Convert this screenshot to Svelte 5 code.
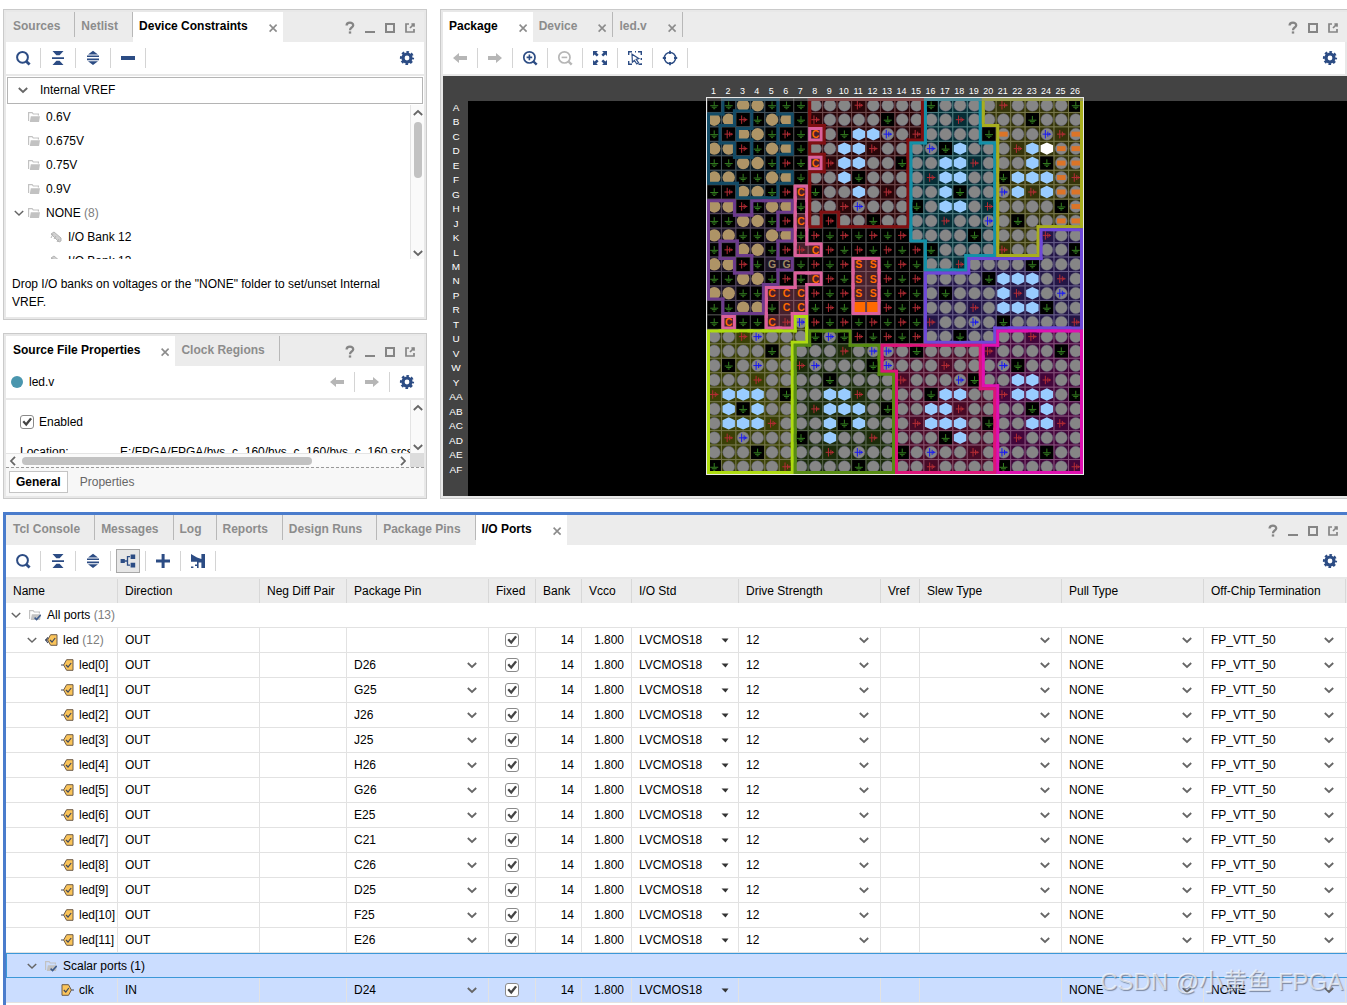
<script lang="ts">
	const CELL = 29;
	const rowNames = 'A B C D E F G H J K L M N P R T U V W Y AA AB AC AD AE AF'.split(' ');

	// g ground, r power, o i/o, t transceiver, h clock capable, b vcco,
	// x placed port, w selected, C/G/S config pins, Q config block
	const pins = [
		'ggttggg oooroooo goooo roooog',
		'ttrgttg roooogoo ooroo oogooo',
		'grttgrg Coghhbor oooog xoobrx',
		'ttrgttg oohhrooo bghoo orhwxx',
		'ggttgrg Crhhoogo ohhro oohgxx',
		'ttggttg oohgoooo rhhoo ghhhxr',
		'grttgrC goohoroo ohgoo bhrhxx',
		'ttrgttg oorbooog ohhor oooogx',
		'ggttgrC oroogooo oroob ogooxx',
		'ttggttg rgrgrgro ooogo oooroo',
		'grttgrr Crgrgrgr goooo roooog',
		'ttrgGGg rgrSSgrg ooroo oogooo',
		'ggttgrg CrgSSrgr oooog hhhoro',
		'ttggCCC rgrSSgrg ogooo hrhobo',
		'ggttgCC grgQQrgr oooro hhhgoo',
		'gCggCrb rgrgrgrg roobo goooor',
		'oorbooo gbgrgrgr oogoo oorooo',
		'oooogoo oorobbog oooor oooogo',
		'ogoboor booogboo orooo bgoooo',
		'ooorooo ogooooro oobgo ohhroo',
		'rhhhogo ohhroooo ghhoo rhhhog',
		'ohghooo rhhhogoo hhroo ooghoo',
		'ohhhroo ohghooor hhhog oohhro',
		'orbooog ohoorooo oghoo oroooo',
		'ooogooo oroboogo booro boogoo',
		'gooooro ooogoooo roooo goooor'
	].map((row) => row.replaceAll(' ', ''));

	// i/o bank of every pin, '.' for none
	const regions = [
		'.dddd..eeeeeeeeccccyyyyyyy',
		'dd.ddd.eeeeeeeeccccyyyyyyy',
		'd.ddd..peeeeeeecccc.yyyyyy',
		'dd.ddd.eeeeeeeccccccyyyyyy',
		'ddddd..peeeeeeccccccyyyyyy',
		'dddddd.eeeeeeeccccccyyyyyy',
		'..ddd.peeeeeeeccccccyyyyyy',
		'zz.zzzpeeeeeeeccccccyyyyyy',
		'zzzzz.pe.eeeeeccccccyyyyyy',
		'zzzzzzp.......ccccccyyysss',
		'z.zzz.pp.......cccccyyysss',
		'zz.zzz....pp...cccssssssss',
		'zzzzz.pp..pp...sssssssssss',
		'zzzzppp...pp...sssssssssss',
		'.zzzppp...pp...sssssssssss',
		'.p..ppl........sssssssssss',
		'lllllllggg.....sssssmmmmmm',
		'llllllggggggkkkkkkkmmmmmmm',
		'llllllggggggkkkkkkkmmmmmmm',
		'llllllgggggggkkkkkkmmmmmmm',
		...Array(6).fill('llllllgggggggkkkkkkkmmmmmm')
	];

	const tint = {
		d: '#0b1c28', z: '#1d1426', p: '#47202c', e: '#290609', c: '#062d35', y: '#34340a',
		s: '#231646', l: '#3a4006', g: '#1b2b0a', k: '#480a26', m: '#42063a'
	};
	const edge = {
		d: '#134b66', z: '#6b3a8b', p: '#dc609c', e: '#801012', c: '#1490a8', y: '#a8ae1e',
		s: '#6e48d8', l: '#aedc10', g: '#578c12', k: '#dc1478', m: '#e010b0'
	};
	const grid = {
		d: '#44525c', z: '#50465c', p: '#7c5560', e: '#70494c', c: '#4d7c80', y: '#77774a',
		s: '#665c88', l: '#74764a', g: '#56634a', k: '#86506a', m: '#824c78'
	};

	// one line per side where the neighbour belongs to another bank
	const borders = regions.flatMap((row, y) =>
		[...row].flatMap((id, x) => {
			if (id == '.') return [];
			const same = (dx: number, dy: number) => regions[y + dy]?.[x + dx] == id;
			// inside a bank a line runs on a little, so inner corners close up
			const l = x * CELL, r = l + CELL, t = y * CELL, b = t + CELL;
			const v = `${t - (same(0, -1) ? 6 : 0)}V${b + (same(0, 1) ? 6 : 0)}`;
			const h = (at: number) => `M${l - (same(-1, 0) ? 6 : 0)} ${at}H${r + (same(1, 0) ? 6 : 0)}`;
			let d = '';
			if (!same(-1, 0)) d += `M${l + 3} ${v}`;
			if (!same(1, 0)) d += `M${r - 3} ${v}`;
			if (!same(0, -1)) d += h(t + 3);
			if (!same(0, 1)) d += h(b - 3);
			return d ? [{ id, d }] : [];
		})
	);

	const ledPins = ['D26', 'G25', 'J26', 'J25', 'H26', 'G26', 'E25', 'C21', 'C26', 'D25', 'F25', 'E26'];
	const base = { dir: 'OUT', fixed: true, bank: 14, vcco: '1.800', std: 'LVCMOS18', drive: '12', pull: 'NONE', term: 'FP_VTT_50' };
	let ports = $state([
		{ ...base, name: 'led', count: 12, level: 1, pin: '' },
		...ledPins.map((pin, i) => ({ ...base, name: `led[${i}]`, count: 0, level: 2, pin }))
	]);
	let scalar = $state([
		{ ...base, name: 'clk', count: 0, level: 2, dir: 'IN', pin: 'D24', drive: '', term: 'NONE' }
	]);
	let enabled = $state(true);

	const columns = [
		['Name', 112], ['Direction', 142], ['Neg Diff Pair', 87], ['Package Pin', 142], ['Fixed', 47],
		['Bank', 46], ['Vcco', 50], ['I/O Std', 107], ['Drive Strength', 142], ['Vref', 39],
		['Slew Type', 142], ['Pull Type', 142], ['Off-Chip Termination', 142]
	];
</script>

{#snippet icon(name)}
	<svg class="icon" viewBox="0 0 16 16" width="16" height="16" aria-hidden="true">
		{#if name == 'search'}
			<circle class="line" cx="7.5" cy="7.3" r="5.4" stroke-width="2" />
			<path class="line" d="M11.4 11.4l3.2 3.2" stroke-width="2.8" />
		{:else if name == 'collapse'}
			<path d="M2.5 1h11L9.6 5.2H6.4zM2 7.2h12v1.7H2zM6.4 10.8h3.2l3.9 4.2h-11z" />
		{:else if name == 'expand'}
			<path d="M8 .8l5 3.8H3zM2 5.4h12v1.6H2zM2 8.6h12v1.6H2zM3 11.2h10L8 15z" />
		{:else if name == 'minus'}
			<path d="M1 6h14v4H1z" />
		{:else if name == 'plus'}
			<path d="M6.6 1h3v5.6H15v3H9.6V15h-3V9.6H1v-3h5.6z" />
		{:else if name == 'gear'}
			<circle class="line" cx="8" cy="8" r="4" stroke-width="3.2" />
			<circle class="line" cx="8" cy="8" r="6" stroke-width="2.2" stroke-dasharray="2.556 2.156" stroke-dashoffset="1.278" />
		{:else if name == 'back'}
			<path d="M1 8l6-5v3h8v4H7v3z" />
		{:else if name == 'forward'}
			<path d="M15 8L9 3v3H1v4h8v3z" />
		{:else if name == 'zoomin' || name == 'zoomout'}
			<circle class="line" cx="7.4" cy="7.4" r="5.6" stroke-width="1.7" />
			<path class="line" d="M11.5 11.5l3.2 3.2" stroke-width="2.4" />
			<path class="line" d={name == 'zoomin' ? 'M4.6 7.4h5.6M7.4 4.6v5.6' : 'M4.6 7.4h5.6'} stroke-width="1.6" />
		{:else if name == 'fit'}
			<path d="M1 1h5L4.4 2.6l2.2 2.2-1.8 1.8-2.2-2.2L1 6zM15 1v5l-1.6-1.6-2.2 2.2-1.8-1.8 2.2-2.2L10 1zM1 15v-5l1.6 1.6 2.2-2.2 1.8 1.8-2.2 2.2L6 15zM15 15h-5l1.6-1.6-2.2-2.2 1.8-1.8 2.2 2.2L15 10z" />
		{:else if name == 'select'}
			<path class="line" d="M1.7 5V1.7H5M11 1.7h3.3V5M1.7 11v3.3H5M14.3 8v2M8 1.7h1M11.5 14.3h2.8v-1" stroke-width="1.4" />
			<path class="line" d="M5 4.2l.4 8 2-1.8 2.4 3.6 1.8-1.2-2.4-3.4 2.6-.8z" stroke-width="1.2" />
		{:else if name == 'target'}
			<circle class="line" cx="8" cy="8" r="5.6" stroke-width="1.5" />
			<path class="line" d="M8 .8V4M8 12v3.2M.8 8H4M12 8h3.2" stroke-width="1.8" />
		{:else if name == 'tree'}
			<path d="M.6 6h4.2v4H.6zM10.6 1.4h4.6v4.6h-4.6zM10.6 9.8h4.6v4.6h-4.6z" />
			<path class="line" d="M4 8h3.5M10 3.7H7.5v8.4H10" stroke-width="1.3" />
		{:else if name == 'ports'}
			<path d="M1 1l6 3.6L11.4 6V1H15v14h-3.6V9.4H8.6V15H7v-2H5v-1.6h2V8.8H1zM1 13.4h2.4V15H1z" />
		{:else if name == 'help'}
			<path class="line" d="M4.6 5.6c0-4 6.8-3.8 6.6-.2C11 7.8 8 7.4 8 10.2" stroke-width="2.3" />
			<path d="M6.8 11.4h2.4v2.2H6.8z" />
		{:else if name == 'min'}
			<path d="M3 11h10v2H3z" />
		{:else if name == 'max'}
			<path class="line" d="M4 4h8v8H4z" stroke-width="2" />
		{:else if name == 'float'}
			<path class="line" d="M7 4H4v8h8V9M8 8l4.4-4.4M9.4 4H12v2.8" stroke-width="1.7" />
		{:else if name == 'close'}
			<path class="line" d="M4.6 4.6l7 7M11.6 4.6l-7 7" stroke-width="1.6" />
		{/if}
	</svg>
{/snippet}

{#snippet chevron(dir = 'down')}
	<svg class="chevron {dir}" viewBox="0 0 10 10" width="10" height="10" aria-hidden="true">
		<path d="M.8 3L5 7l4.2-4" />
	</svg>
{/snippet}

{#snippet folder(checked = false)}
	<svg class="folder" viewBox="0 0 12 12" width="12" height="12" aria-hidden="true">
		<path d="M0 1h4.4l1.2 1.4H11v2H9.8v-.9H5L3.9 2.2H1.2V10H0z" />
		<path d="M2.8 5.2H12l-1 5.8H1.8z" />
		{#if checked}<path class="tick" d="M5.6 8.6l2 2L11.6 6" />{/if}
	</svg>
{/snippet}

{#snippet port(dir, group)}
	<svg class="port" viewBox="0 0 13 12" width="13" height="12" aria-hidden="true">
		{#if dir == 'IN'}
			<path class="body" d="M1 .7h6.5L10.4 6l-2.9 5.3H1z" />
			<path class="tick" d="M2.8 6l2 2 3-4M10.4 6H13" />
		{:else}
			<path class="body" d="M12 .7H5.6L2.6 6l3 5.3H12z" />
			{#if group}<path class="tick" d="M3 3.4L.8 6 3 9" />{/if}
			<path class="tick" d="M5 6l2 2 3.2-4M0 6h2.6" />
		{/if}
	</svg>
{/snippet}

{#snippet tabs(items, active, buttons)}
	<div class="tabs">
		<div class="tablist" role="tablist">
			{#each items as [label, closable]}
				<div class="tab" class:active={label == active}>
					<button role="tab" aria-selected={label == active}>{label}</button>
					{#if closable}<button class="close" aria-label="Close {label}">{@render icon('close')}</button>{/if}
				</div>
			{/each}
		</div>
		<div class="window">
			{#each buttons as b}<button aria-label={b}>{@render icon(b)}</button>{/each}
		</div>
	</div>
{/snippet}

{#snippet tool(name, cls = '')}
	<span class="tool"><button class={cls} aria-label={name} disabled={cls == 'off'}>{@render icon(name)}</button></span>
{/snippet}

{#snippet vscroll(thumb)}
	<div class="vscroll">
		{@render chevron('up')}
		<div class="track">{#if thumb}<div class="thumb"></div>{/if}</div>
		{@render chevron()}
	</div>
{/snippet}

{#snippet combo(value, label, small = false)}
	<span class="combo" class:small>
		<select aria-label={label}><option>{value}</option></select>
		{#if small}
			<svg viewBox="0 0 8 5" width="8" height="5" aria-hidden="true"><path d="M.5 .5h7L4.5 4.5z" /></svg>
		{:else}
			{@render chevron()}
		{/if}
	</span>
{/snippet}

{#snippet portRow(p, selected)}
	<tr class:selected>
		<td>
			<span class="name level{p.level}">
				{#if p.count}{@render chevron()}{/if}
				{@render port(p.dir, p.count > 0)}
				<span>{p.name}{#if p.count}&nbsp;<i>({p.count})</i>{/if}</span>
			</span>
		</td>
		<td>{p.dir}</td>
		<td></td>
		<td>{#if p.pin}{@render combo(p.pin, 'Package pin')}{/if}</td>
		<td class="mid"><input type="checkbox" bind:checked={p.fixed} aria-label="Fixed {p.name}" /></td>
		<td class="num">{p.bank}</td>
		<td class="num">{p.vcco}</td>
		<td>{@render combo(p.std, 'I/O standard', true)}</td>
		<td>{#if p.drive}{@render combo(p.drive, 'Drive strength')}{/if}</td>
		<td></td>
		<td>{#if p.drive}{@render combo('', 'Slew type')}{/if}</td>
		<td>{@render combo(p.pull, 'Pull type')}</td>
		<td>{@render combo(p.term, 'Off-chip termination')}</td>
		<td></td>
	</tr>
{/snippet}

<div class="app">
	<div class="upper">
		<div class="side">
			<section class="panel">
				{@render tabs([['Sources'], ['Netlist'], ['Device Constraints', true]], 'Device Constraints', ['help', 'min', 'max', 'float'])}
				<div class="toolbar">
					{@render tool('search')}
					{@render tool('collapse')}
					{@render tool('expand')}
					{@render tool('minus')}
					<button class="settings" aria-label="Settings">{@render icon('gear')}</button>
				</div>
				<button class="group">{@render chevron()}Internal VREF</button>
				<div class="treebox">
					<ul class="tree">
						{#each ['0.6V', '0.675V', '0.75V', '0.9V'] as v}
							<li>{@render folder()}{v}</li>
						{/each}
						<li class="open">{@render chevron()}{@render folder()}<span>NONE <i>(8)</i></span></li>
						{#each [12, 13] as n}
							<li class="bank">
								<svg class="bankicon" viewBox="0 0 12 12" width="12" height="12" aria-hidden="true">
									<path d="M1 3l3-2 7 6v3l-2 1-7-7zM3 3l-2 4M6 5L4 8M9 8l-2 3" />
								</svg>I/O Bank {n}
							</li>
						{/each}
					</ul>
					{@render vscroll(true)}
				</div>
				<p class="hint">Drop I/O banks on voltages or the "NONE" folder to set/unset Internal VREF.</p>
			</section>

			<section class="panel">
				{@render tabs([['Source File Properties', true], ['Clock Regions']], 'Source File Properties', ['help', 'min', 'max', 'float'])}
				<div class="toolbar">
					<span class="file"><span class="dot"></span>led.v</span>
					{@render tool('back', 'off')}
					{@render tool('forward', 'off')}
					<button class="settings" aria-label="Settings">{@render icon('gear')}</button>
				</div>
				<div class="props">
					<div class="propview">
						<label class="enabled"><input type="checkbox" bind:checked={enabled} />Enabled</label>
						<div class="prop"><span>Location:</span><span>E:/FPGA/FPGA/hys_c_160/hys_c_160/hys_c_160.srcs</span></div>
					</div>
					{@render vscroll(false)}
					<div class="hscroll">
						{@render chevron('left')}
						<div class="track"><div class="thumb"></div></div>
						{@render chevron('right')}
					</div>
					<div class="corner"></div>
				</div>
				<div class="subtabs">
					<button class="active">General</button>
					<button>Properties</button>
				</div>
			</section>
		</div>

		<section class="panel device">
			{@render tabs([['Package', true], ['Device', true], ['led.v', true]], 'Package', ['help', 'max', 'float'])}
			<div class="toolbar">
				{@render tool('back', 'off')}
				{@render tool('forward', 'off')}
				{@render tool('zoomin')}
				{@render tool('zoomout', 'off')}
				{@render tool('fit')}
				{@render tool('select')}
				{@render tool('target')}
				<button class="settings" aria-label="Settings">{@render icon('gear')}</button>
			</div>
			<div class="canvas">
				<svg viewBox="0 -44 50 842" width="25" height="420">
					{#each rowNames as r, y}
						<text class="rowname" x="26" y={y * CELL + 26}>{r}</text>
					{/each}
				</svg>
				<svg class="package" viewBox="0 -44 754 842" width="376" height="420">
					{#each rowNames as _, x}
						<text class="colname" x={x * CELL + 13} y="-8">{x + 1}</text>
					{/each}
					{#each pins as row, y}
						{#each row as pin, x}
							{@const id = regions[y][x]}
							<g transform="translate({x * CELL} {y * CELL})">
								<rect class="cell" width={CELL} height={CELL} fill={pin == 'g' ? '#000' : (tint[id] ?? '#000')} stroke={grid[id] ?? '#4c4c4c'} />
								{#if pin == 'o' || pin == 'b' || pin == 'x'}
									<circle class="io" cx="14.5" cy="14.5" r="12" />
								{:else if pin == 't'}
									<circle class="gt" cx="14.5" cy="14.5" r="12.5" />
								{:else if pin == 'h' || pin == 'w'}
									<path class="clock" class:picked={pin == 'w'} d="M14.5 2L27 8v13l-12.5 6L2 21V8z" />
								{:else if pin == 'g'}
									<path class="gnd" d="M14.5 7v8M6.5 15.5h16M9.5 18.5h10M12.5 21.5h4" />
								{:else if pin == 'Q'}
									<path class="block" d="M2 3h25v23H2z" />
								{:else if pin != 'r'}
									<text class="letter" class:dim={pin == 'G'} x="14.5" y="22">{pin}</text>
								{/if}
								{#if pin == 'r' || pin == 'b'}
									<path class="power" class:vcco={pin == 'b'} d="M6 14.5h17M11.5 6v17M16.5 9.5v10M19.5 12v5" />
								{:else if pin == 'x'}
									<path class="placed" d="M6 9.5h17v10H6z" />
								{/if}
							</g>
						{/each}
					{/each}
					{#each borders as b}
						<path class="border" d={b.d} stroke={edge[b.id]} />
					{/each}
					<rect class="shade" width="754" height="6" />
					<rect class="outline" x="-1" y="-1" width="756" height="756" />
				</svg>
			</div>
		</section>
	</div>

	<section class="ports">
		{@render tabs(
			[['Tcl Console'], ['Messages'], ['Log'], ['Reports'], ['Design Runs'], ['Package Pins'], ['I/O Ports', true]],
			'I/O Ports',
			['help', 'min', 'max', 'float']
		)}
		<div class="toolbar">
			{@render tool('search')}
			{@render tool('collapse')}
			{@render tool('expand')}
			{@render tool('tree', 'pressed')}
			{@render tool('plus')}
			{@render tool('ports')}
			<button class="settings" aria-label="Settings">{@render icon('gear')}</button>
		</div>
		<table>
			<colgroup>
				{#each columns as [, width]}<col style="width: {width}px" />{/each}
				<col />
			</colgroup>
			<thead>
				<tr>
					{#each columns as [label]}<th>{label}</th>{/each}
					<th></th>
				</tr>
			</thead>
			<tbody>
				<tr>
					<td colspan="14"><span class="name level0">{@render chevron()}{@render folder(true)}<span>All ports <i>(13)</i></span></span></td>
				</tr>
				{#each ports as p}{@render portRow(p, false)}{/each}
				<tr class="selected focus">
					<td colspan="14"><span class="name level1">{@render chevron()}{@render folder(true)}<span>Scalar ports (1)</span></span></td>
				</tr>
				{#each scalar as p}{@render portRow(p, true)}{/each}
			</tbody>
		</table>
	</section>
	<div class="watermark">CSDN @小黄鱼 FPGA</div>
</div>

<style>
	:global(body) {
		margin: 0;
		background: #fff;
	}
	.app,
	.app :where(*) {
		box-sizing: border-box;
	}
	.app {
		position: relative;
		display: flex;
		flex-direction: column;
		gap: 13px;
		height: 100vh;
		overflow: hidden;
		padding: 9px 0 0 3px;
		font: 12px/18px 'Liberation Sans', Arial, sans-serif;
		color: #000;
	}
	button,
	select {
		margin: 0;
		padding: 0;
		border: 0;
		background: none;
		font: inherit;
		color: inherit;
	}
	svg {
		display: block;
		flex: none;
	}
	i {
		font-style: normal;
		color: #7d7d7d;
	}
	.icon {
		fill: currentColor;
	}
	.icon .line {
		fill: none;
		stroke: currentColor;
	}
	.upper {
		display: grid;
		grid-template-columns: 424px minmax(0, 1fr);
		gap: 13px;
	}
	.side {
		display: grid;
		gap: 13px;
	}
	.panel {
		display: flex;
		flex-direction: column;
		border: 1px solid #cacaca;
		box-shadow: inset 0 0 0 2px #e8e8e8;
		padding: 2px;
	}
	.device {
		border-right: 0;
		padding-right: 0;
	}

	/* tabs */
	.tabs {
		display: flex;
		justify-content: space-between;
		height: 30px;
		background: #ececec;
	}
	.tablist {
		display: flex;
	}
	.tab {
		display: flex;
		align-items: flex-start;
		height: 25px;
		padding: 5px 14px 0 6px;
		border-right: 1px solid #b8b8b8;
		font-weight: bold;
		color: #8c8c8c;
	}
	.tab:has(.close) {
		padding-right: 2px;
	}
	.tab.active {
		height: 30px;
		border-right: 0;
		background: #fff;
		color: #000;
	}
	.tab:first-child {
		padding-left: 7px;
	}
	.device .tab:first-child {
		padding-left: 6px;
	}
	.tab .close {
		margin: 3px 0 0 17px;
		color: #8c8c8c;
	}
	.window {
		display: flex;
		padding-right: 4px;
		color: #858585;
	}
	.window button {
		display: flex;
		align-items: center;
		justify-content: center;
		width: 20px;
		height: 32px;
	}

	/* toolbars */
	.toolbar {
		display: flex;
		align-items: center;
		height: 34px;
		border-bottom: 2px solid #e8e8e8;
		color: #2c4c84;
	}
	.tool {
		display: flex;
		align-items: center;
		justify-content: center;
		width: 35px;
		height: 20px;
		border-right: 1px solid #d4d4d4;
	}
	.tool button {
		display: flex;
		align-items: center;
		justify-content: center;
		width: 24px;
		height: 24px;
		flex: none;
	}
	.tool .off {
		color: #b6b6b6;
	}
	.tool .pressed {
		border: 1px solid #a8a8a8;
		background: #e6e6e6;
	}
	.settings {
		display: flex;
		justify-content: center;
		width: 34px;
		margin-left: auto;
	}
	.file {
		display: flex;
		flex: 1;
		align-items: center;
		gap: 6px;
		padding-left: 5px;
		color: #000;
	}
	.dot {
		width: 12px;
		height: 12px;
		border-radius: 50%;
		background: #4a96ae;
	}
	.file ~ .settings {
		margin-left: 0;
	}

	.chevron {
		fill: none;
		stroke: #666;
		stroke-width: 1.8;
	}
	.chevron.up {
		transform: rotate(180deg);
	}
	.chevron.left {
		transform: rotate(90deg);
	}
	.chevron.right {
		transform: rotate(-90deg);
	}
	.folder {
		fill: #c2c2c2;
	}
	.tick {
		fill: none;
		stroke: #3c5a8c;
		stroke-width: 1.5;
	}
	.port .body {
		fill: #fac45a;
		stroke: #6c5a48;
		stroke-width: 1;
	}
	.port .tick {
		stroke: #40485c;
		stroke-width: 1.2;
	}

	/* device constraints */
	.group {
		display: flex;
		align-items: center;
		gap: 12px;
		height: 27px;
		margin: 1px;
		padding: 0 10px 2px;
		border: 1px solid #b4b4b4;
		text-align: left;
	}
	.treebox {
		display: flex;
		height: 154px;
		overflow: hidden;
	}
	.tree {
		flex: 1;
		margin: 0;
		padding: 0;
		list-style: none;
	}
	.tree li {
		display: flex;
		align-items: center;
		gap: 6px;
		height: 24px;
		padding-left: 22px;
	}
	.tree .open {
		gap: 4px;
		padding-left: 8px;
	}
	.tree .open .chevron,
	.name .chevron {
		stroke-width: 1.5;
	}
	.tree .open span {
		margin-left: 2px;
	}
	.tree .bank {
		padding-left: 44px;
	}
	.bankicon {
		fill: #d0d0d0;
		stroke: #b4b4b4;
	}
	.vscroll {
		display: flex;
		flex-direction: column;
		align-items: center;
		width: 14px;
		padding: 3px 0 1px;
		border-left: 1px solid #e4e4e4;
		background: #fafafa;
	}
	.vscroll .track {
		flex: 1;
		padding-top: 4px;
	}
	.vscroll .thumb {
		width: 8px;
		height: 56px;
		border-radius: 4px;
		background: #c2c2c2;
	}
	.hint {
		margin: 0;
		padding: 16px 20px 6px 6px;
	}

	/* source file properties */
	.props {
		display: grid;
		grid-template: 53px 14px / minmax(0, 1fr) 14px;
	}
	.propview {
		overflow: hidden;
		padding: 13px 0 0 14px;
		white-space: nowrap;
	}
	.enabled {
		display: flex;
		align-items: center;
		gap: 5px;
	}
	.prop {
		display: grid;
		grid-template-columns: 100px 1fr;
		margin-top: 12px;
	}
	.hscroll {
		display: flex;
		align-items: center;
		gap: 4px;
		padding: 0 2px;
		border-top: 1px solid #e4e4e4;
		background: #fafafa;
	}
	.hscroll .track {
		flex: 1;
	}
	.hscroll .thumb {
		width: 78%;
		height: 8px;
		border-radius: 4px;
		background: #c2c2c2;
	}
	.corner {
		background: #dcdcdc;
	}
	.subtabs {
		display: flex;
		align-items: center;
		gap: 5px;
		height: 29px;
		padding-left: 3px;
		border-top: 1px dashed #999;
		background: #f7f7f7;
	}
	.subtabs button {
		height: 22px;
		padding: 0 6px;
		border: 1px solid transparent;
		color: #666;
	}
	.subtabs .active {
		border-color: #c4c4c4;
		background: #fff;
		font-weight: bold;
		color: #000;
	}

	input[type='checkbox'] {
		appearance: none;
		display: block;
		width: 14px;
		height: 14px;
		margin: 0;
		border: 1px solid #8a8a8a;
		border-radius: 3px;
		background: #fff;
	}
	input[type='checkbox']:checked::after {
		content: '';
		display: block;
		width: 12px;
		height: 12px;
		background: #444;
		clip-path: polygon(12% 50%, 26% 38%, 42% 56%, 76% 14%, 92% 26%, 44% 86%);
	}

	/* package view */
	.canvas {
		display: grid;
		grid-template-columns: 25px 1fr 25px;
		justify-items: center;
		flex: 1;
		background: linear-gradient(#434343, #434343) 0 0 / 100% 25px no-repeat,
			linear-gradient(#434343, #434343) 0 0 / 25px 100% no-repeat, #000;
	}
	.package {
		overflow: visible;
	}
	.canvas text {
		fill: #fff;
		text-anchor: middle;
	}
	.canvas .rowname {
		font-size: 20px;
	}
	.canvas .colname {
		font-size: 18px;
	}
	.canvas .letter {
		font-size: 21px;
		font-weight: bold;
		fill: #ff6a00;
	}
	.canvas .dim {
		fill: #a08a64;
	}
	.cell {
		stroke-width: 2;
	}
	.io {
		fill: #868686;
		stroke: #62627c;
	}
	.gt {
		fill: #ae9466;
	}
	.clock {
		fill: #99ccff;
	}
	.picked {
		fill: #fff;
	}
	.gnd {
		fill: none;
		stroke: #348020;
		stroke-width: 2;
	}
	.block {
		fill: #ff6a00;
	}
	.power {
		fill: none;
		stroke: #b42c34;
		stroke-width: 2;
	}
	.vcco {
		stroke: #1818f4;
	}
	.placed {
		fill: #dc7428;
	}
	.border {
		fill: none;
		stroke-width: 6;
	}
	.shade {
		fill: #888;
		fill-opacity: 0.5;
	}
	.outline {
		fill: none;
		stroke: #e8e8e8;
		stroke-width: 2;
	}

	/* i/o ports */
	.ports {
		flex: 1;
		min-height: 0;
		overflow: hidden;
		border: solid #4a7ccc;
		border-width: 3px 0 0 3px;
	}
	table {
		width: 100%;
		border-collapse: separate;
		border-spacing: 0;
		table-layout: fixed;
	}
	th,
	td {
		height: 25px;
		padding: 0 0 0 7px;
		border-right: 1px solid #e2e2e2;
		border-bottom: 1px solid #e2e2e2;
		white-space: nowrap;
		text-align: left;
		font-weight: normal;
	}
	th {
		height: 24px;
		border-right-color: #d8d8d8;
		border-bottom: 0;
		background: #ececec;
	}
	th:last-child,
	td:last-child {
		padding: 0;
		border-right: 0;
	}
	.mid input {
		margin: 0 0 0 9px;
	}
	.num {
		padding: 0 7px 0 0;
		text-align: right;
	}
	.name {
		display: flex;
		align-items: center;
		height: 24px;
		margin-left: -2px;
	}
	.name .chevron {
		margin-right: 8px;
	}
	.name .folder {
		margin-right: 6px;
	}
	.name .port {
		margin-right: 5px;
	}
	td[colspan] .name {
		margin-left: 5px;
	}
	.level1 {
		padding-left: 16px;
	}
	.level2 {
		padding-left: 50px;
	}
	.combo {
		display: grid;
		align-items: center;
		padding-right: 11px;
	}
	.combo > :global(*) {
		grid-area: 1 / 1;
	}
	.combo select {
		appearance: none;
		width: 100%;
		outline: none;
	}
	.combo svg {
		justify-self: end;
		pointer-events: none;
	}
	.combo.small {
		padding-right: 9px;
	}
	.combo.small svg {
		fill: #333;
	}
	.selected td {
		background: #cbddff;
	}
	.focus td {
		border: 1px solid #3c98d8;
		border-right: 0;
	}
	.focus .name {
		height: 22px;
	}
	td[colspan] .name.level1 {
		margin-left: 4px;
	}
	.watermark {
		position: absolute;
		right: 4px;
		bottom: 6px;
		font: 24px/34px 'Liberation Sans', 'Noto Sans CJK SC', sans-serif;
		color: rgba(255, 255, 255, 0.65);
		text-shadow: 1px 1px 1px rgba(90, 100, 120, 0.7);
		pointer-events: none;
	}
</style>
